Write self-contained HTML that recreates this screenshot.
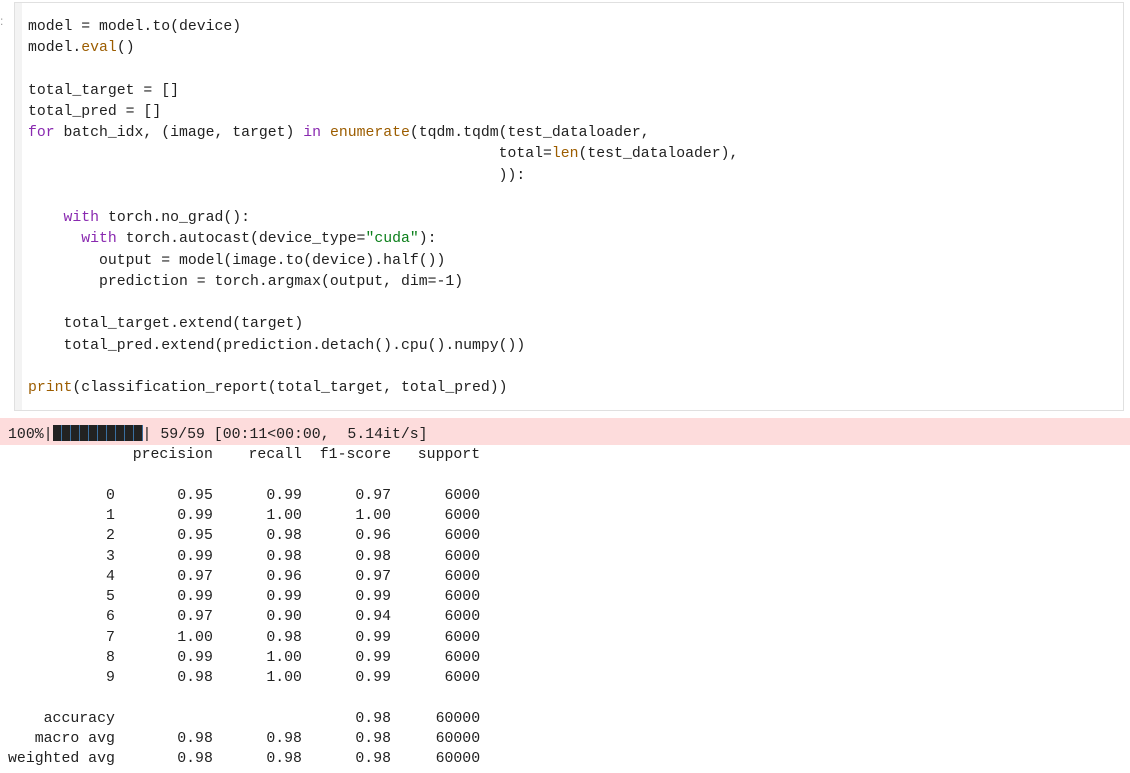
<!DOCTYPE html>
<html><head><meta charset="utf-8"><style>
html,body{margin:0;padding:0;background:#fff;width:1130px;height:773px;overflow:hidden}
pre{margin:0;font-family:"Liberation Mono","DejaVu Sans Mono",monospace;font-size:14.8px}
.cell{position:absolute;left:14px;top:2px;width:1108px;height:407px;border:1px solid #e0e0e0;background:#fff}
.gut{position:absolute;left:0;top:0;width:7px;height:100%;background:#f3f3f3}
.code{position:absolute;left:13px;top:14px;line-height:21.24px;color:#212121}
.k{color:#8929b0}.b{color:#9c5d00}.s{color:#0b7f1a}
.dots{position:absolute;left:0;top:14px;color:#999;font:12px "Liberation Sans",sans-serif}
.err{position:absolute;left:0;top:418px;width:1130px;height:27px;background:#fddcdc}
.out{position:absolute;left:8px;top:425px;line-height:20.27px;color:#212121;font-size:14.85px}
.bar{display:inline-block;width:90px;height:16px;background:#222;vertical-align:-3px;
background-image:repeating-linear-gradient(90deg,#222 0 8px,#3a6fa0 8px 9px)}
</style></head><body>
<div class="dots">:</div>
<div class="cell"><div class="gut"></div>
<pre class="code">model = model.to(device)
model.<span class="b">eval</span>()

total_target = []
total_pred = []
<span class="k">for</span> batch_idx, (image, target) <span class="k">in</span> <span class="b">enumerate</span>(tqdm.tqdm(test_dataloader,
                                                     total=<span class="b">len</span>(test_dataloader),
                                                     )):

    <span class="k">with</span> torch.no_grad():
      <span class="k">with</span> torch.autocast(device_type=<span class="s">"cuda"</span>):
        output = model(image.to(device).half())
        prediction = torch.argmax(output, dim=-1)

    total_target.extend(target)
    total_pred.extend(prediction.detach().cpu().numpy())

<span class="b">print</span>(classification_report(total_target, total_pred))</pre></div>
<div class="err"></div>
<pre class="out">100%|<span class="bar"></span>| 59/59 [00:11&lt;00:00,  5.14it/s]
              precision    recall  f1-score   support

           0       0.95      0.99      0.97      6000
           1       0.99      1.00      1.00      6000
           2       0.95      0.98      0.96      6000
           3       0.99      0.98      0.98      6000
           4       0.97      0.96      0.97      6000
           5       0.99      0.99      0.99      6000
           6       0.97      0.90      0.94      6000
           7       1.00      0.98      0.99      6000
           8       0.99      1.00      0.99      6000
           9       0.98      1.00      0.99      6000

    accuracy                           0.98     60000
   macro avg       0.98      0.98      0.98     60000
weighted avg       0.98      0.98      0.98     60000</pre>
</body></html>
